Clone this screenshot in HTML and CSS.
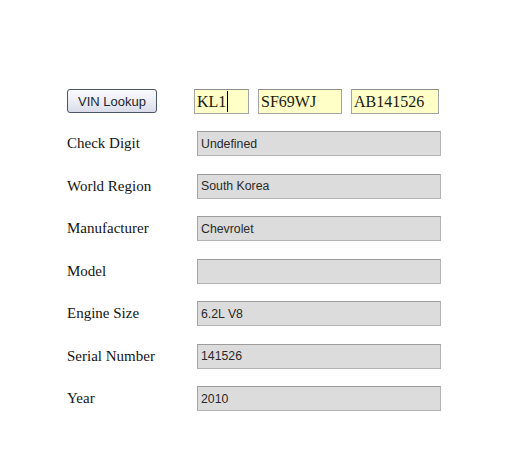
FILE: index.html
```html
<!DOCTYPE html>
<html lang="en">
<head>
    <meta charset="utf-8">
    <title>VIN Lookup</title>
    <link rel="stylesheet" href="styles.css">
</head>
<body>
    <div class="container">
        <div class="lookup-row">
            <button class="lookup-button">VIN Lookup</button>
            <div class="vin-part wmi">KL1<span class="caret"></span></div>
            <div class="vin-part vds">SF69WJ</div>
            <div class="vin-part vis">AB141526</div>
        </div>

        <div class="fields">
            <span class="label">Check Digit</span>
            <div class="value">Undefined</div>

            <span class="label">World Region</span>
            <div class="value">South Korea</div>

            <span class="label">Manufacturer</span>
            <div class="value">Chevrolet</div>

            <span class="label">Model</span>
            <div class="value"></div>

            <span class="label">Engine Size</span>
            <div class="value">6.2L V8</div>

            <span class="label">Serial Number</span>
            <div class="value">141526</div>

            <span class="label">Year</span>
            <div class="value">2010</div>
        </div>
    </div>
</body>
</html>
```

FILE: styles.css
```css
*{
    margin: 0;
    padding: 0;
    box-sizing: border-box;
}
body{
    width: 100%;
    height: 100vh;
    background-color: white;
    font-family: "Liberation Serif", serif;
    color: #111;
}
.container{
    padding: 89px 0 0 67px;
}
.lookup-row{
    display: flex;
    align-items: flex-start;
}
.lookup-button{
    width: 90px;
    height: 24px;
    margin-right: 37px;
    border: 1px solid #4a5566;
    border-radius: 3px;
    background: linear-gradient(#fbfbfd, #eceef4 50%, #d9dce8);
    font-family: "Liberation Sans", sans-serif;
    font-size: 13px;
    color: #1c2433;
    cursor: pointer;
}
.vin-part{
    height: 25px;
    display: flex;
    align-items: center;
    padding-left: 2px;
    margin-right: 9px;
    background-color: #ffffc8;
    border: 1px solid #a4a4a4;
    border-top-color: #8e8e8e;
    font-size: 16px;
    color: #1a1a10;
    white-space: nowrap;
}
.wmi{
    width: 55px;
}
.vds{
    width: 84px;
}
.vis{
    width: 88px;
    margin-right: 0;
}
.caret{
    display: inline-block;
    width: 1px;
    height: 21px;
    margin-left: 1px;
    background-color: black;
}
.fields{
    display: grid;
    grid-template-columns: 130px 244px;
    grid-auto-rows: 25px;
    row-gap: 17.5px;
    margin-top: 17px;
    align-items: center;
}
.label{
    font-size: 15px;
    color: #141414;
}
.value{
    height: 25px;
    display: flex;
    align-items: center;
    padding-left: 3px;
    background-color: #dcdcdc;
    border: 1px solid #b4b4b4;
    border-top-color: #9c9c9c;
    border-left-color: #a4a4a4;
    font-family: "Liberation Sans", sans-serif;
    font-size: 12.3px;
    color: #2a2a2a;
}
```
